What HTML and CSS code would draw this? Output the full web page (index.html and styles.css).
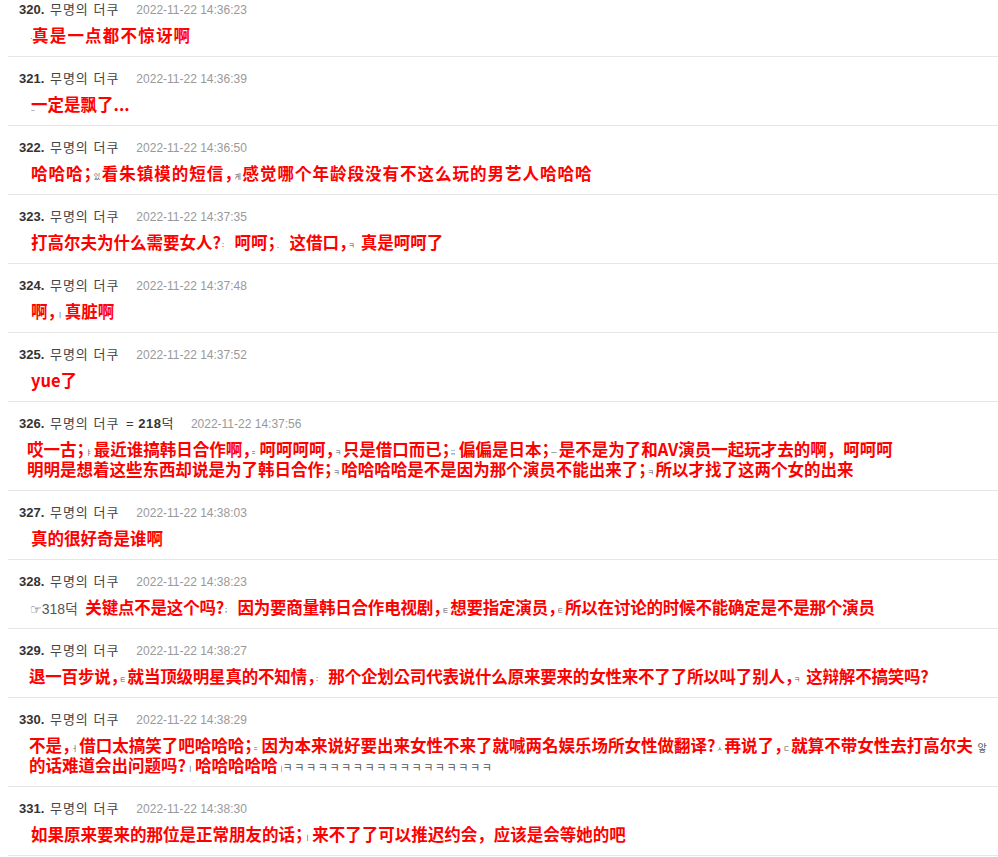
FILE: index.html
```html
<!DOCTYPE html>
<html lang="ko">
<head>
<meta charset="utf-8">
<title>댓글</title>
<link rel="stylesheet" href="styles.css">
</head>
<body>
<ul class="comments">
  <li class="comment">
    <div class="meta"><span class="num">320.</span> <span class="nick">무명의 더쿠</span><span class="date">2022-11-22 14:36:23</span></div>
    <div class="text in-2 wide-2"><span class="t first">ㆍ</span>真是一点都不惊讶啊</div>
  </li>
  <li class="comment">
    <div class="meta"><span class="num">321.</span> <span class="nick">무명의 더쿠</span><span class="date">2022-11-22 14:36:39</span></div>
    <div class="text"><span class="t lead">_</span>一定是飘了...</div>
  </li>
  <li class="comment">
    <div class="meta"><span class="num">322.</span> <span class="nick">무명의 더쿠</span><span class="date">2022-11-22 14:36:50</span></div>
    <div class="text wide-1">哈哈哈<span class="p">；</span><span class="t">있.</span>看朱镇模的短信<span class="p">，</span><span class="t">게</span>感觉哪个年龄段没有不这么玩的男艺人哈哈哈</div>
  </li>
  <li class="comment">
    <div class="meta"><span class="num">323.</span> <span class="nick">무명의 더쿠</span><span class="date">2022-11-22 14:37:35</span></div>
    <div class="text">打高尔夫为什么需要女人?<span class="t">:</span> 呵呵<span class="p">；</span><span class="t">.</span> 这借口<span class="p">，</span><span class="t">ㅋ</span> 真是呵呵了</div>
  </li>
  <li class="comment">
    <div class="meta"><span class="num">324.</span> <span class="nick">무명의 더쿠</span><span class="date">2022-11-22 14:37:48</span></div>
    <div class="text">啊<span class="p">，</span><span class="t">ㅣ</span>真脏啊</div>
  </li>
  <li class="comment">
    <div class="meta"><span class="num">325.</span> <span class="nick">무명의 더쿠</span><span class="date">2022-11-22 14:37:52</span></div>
    <div class="text">yue了</div>
  </li>
  <li class="comment">
    <div class="meta"><span class="num">326.</span> <span class="nick">무명의 더쿠</span> <span class="extra">= <b>218</b>덕</span><span class="date">2022-11-22 14:37:56</span></div>
    <div class="text in-0">哎一古<span class="p">；</span><span class="t">ㅑ</span>最近谁搞韩日合作啊<span class="p">，</span><span class="t">=</span>呵呵呵呵<span class="p">，</span><span class="t">ㅋ</span>只是借口而已<span class="p">；</span><span class="t">;;</span>偏偏是日本<span class="p">；</span><span class="t">ㅡ</span>是不是为了和AV演员一起玩才去的啊，呵呵呵<br>明明是想着这些东西却说是为了韩日合作<span class="p">；</span><span class="t">ㅋ</span>哈哈哈哈是不是因为那个演员不能出来了<span class="p">；</span><span class="t">ㅋ</span>所以才找了这两个女的出来</div>
  </li>
  <li class="comment">
    <div class="meta"><span class="num">327.</span> <span class="nick">무명의 더쿠</span><span class="date">2022-11-22 14:38:03</span></div>
    <div class="text">真的很好奇是谁啊</div>
  </li>
  <li class="comment">
    <div class="meta"><span class="num">328.</span> <span class="nick">무명의 더쿠</span><span class="date">2022-11-22 14:38:23</span></div>
    <div class="text in-1 tight"><span class="ref"><span class="hand">☞</span>318덕</span> 关键点不是这个吗?<span class="t">;</span> 因为要商量韩日合作电视剧<span class="p">，</span><span class="t">ㅌ</span>想要指定演员<span class="p">，</span><span class="t">ㅌ</span>所以在讨论的时候不能确定是不是那个演员</div>
  </li>
  <li class="comment">
    <div class="meta"><span class="num">329.</span> <span class="nick">무명의 더쿠</span><span class="date">2022-11-22 14:38:27</span></div>
    <div class="text in-1 tight">退一百步说<span class="p">，</span><span class="t">ㅌ</span>就当顶级明星真的不知情<span class="p">，</span><span class="t">:</span> 那个企划公司代表说什么原来要来的女性来不了了所以叫了别人<span class="p">，</span><span class="t">ㅋ</span> 这辩解不搞笑吗?</div>
  </li>
  <li class="comment">
    <div class="meta"><span class="num">330.</span> <span class="nick">무명의 더쿠</span><span class="date">2022-11-22 14:38:29</span></div>
    <div class="text in-1">不是<span class="p">，</span><span class="t">ㅓ</span>借口太搞笑了吧哈哈哈<span class="p">；</span><span class="t">=</span>因为本来说好要出来女性不来了就喊两名娱乐场所女性做翻译?<span class="t">ㅅ</span>再说了<span class="p">，</span><span class="t">ㄷ</span>就算不带女性去打高尔夫 <span class="ang">앟</span><br>的话难道会出问题吗?<span class="t">ㅣ</span>哈哈哈哈哈<span class="t bar">ㅣ</span><span class="kk">ㅋㅋㅋㅋㅋㅋㅋㅋㅋㅋㅋㅋㅋㅋㅋㅋㅋㅋ</span></div>
  </li>
  <li class="comment">
    <div class="meta"><span class="num">331.</span> <span class="nick">무명의 더쿠</span><span class="date">2022-11-22 14:38:30</span></div>
    <div class="text">如果原来要来的那位是正常朋友的话<span class="p">；</span><span class="t">ㅣ</span>来不了了可以推迟约会，应该是会等她的吧</div>
  </li>
</ul>
</body>
</html>
```

FILE: styles.css
```css
html, body {
  margin: 0;
  padding: 0;
  background: #ffffff;
}

.comments {
  list-style: none;
  margin: -12px 0 0 8px;
  padding: 0;
}

.comment {
  border-bottom: 1px solid #e6e6e6;
  padding: 13px 0 11px 0;
}

.meta {
  padding-left: 11px;
  height: 18px;
  line-height: 18px;
  font-family: "Liberation Sans", "Noto Sans CJK KR", sans-serif;
  font-size: 13px;
  color: #333333;
  white-space: nowrap;
}

.num {
  font-weight: bold;
  color: #333333;
}

.nick {
  margin-left: 2px;
  letter-spacing: 1px;
  color: #444444;
}

.extra {
  margin-left: 3px;
  letter-spacing: 0.5px;
  color: #333333;
}

.extra b {
  font-weight: bold;
}

.date {
  margin-left: 17px;
  font-size: 12px;
  color: #999999;
}

.text {
  margin-top: 6px;
  padding-left: 23px;
  line-height: 20px;
  font-family: "Noto Sans CJK SC", sans-serif;
  font-size: 16.5px;
  font-weight: bold;
  color: #ff0000;
  white-space: nowrap;
}

.text.in-0 {
  padding-left: 19px;
}

.text.in-1 {
  padding-left: 21px;
}

.text.in-2 {
  padding-left: 20px;
}

.text.wide-1 {
  letter-spacing: 1px;
}

.text.wide-2 {
  letter-spacing: 1.2px;
}

.text.tight {
  letter-spacing: -0.2px;
}

.p {
  font-feature-settings: "halt";
}

.t {
  display: inline-block;
  width: 7px;
  margin: 0 1px 0 1px;
  overflow: hidden;
  font-family: "Noto Sans CJK KR", sans-serif;
  font-size: 7px;
  line-height: 8px;
  letter-spacing: 0;
  font-weight: normal;
  color: #555555;
  vertical-align: middle;
  white-space: nowrap;
}

.t.first {
  width: 4px;
  margin: 0;
}

.t.lead {
  width: 4px;
  margin: 0 -4px 0 0;
}

.t.bar {
  width: 3px;
}

.ref {
  font-family: "Liberation Sans", "Noto Sans CJK KR", sans-serif;
  font-size: 14px;
  line-height: 14px;
  letter-spacing: 0;
  font-weight: normal;
  color: #555555;
  margin: 0 3px 0 1px;
}

.hand {
  font-family: "DejaVu Sans", sans-serif;
  font-size: 13px;
  line-height: 14px;
  color: #666666;
}

.ang {
  font-family: "Noto Sans CJK KR", sans-serif;
  font-size: 10px;
  line-height: 10px;
  font-weight: normal;
  color: #555555;
}

.kk {
  font-family: "Noto Sans CJK KR", sans-serif;
  font-size: 11px;
  line-height: 11px;
  font-weight: normal;
  letter-spacing: 1.6px;
  color: #555555;
  margin-left: 0;
}
```
